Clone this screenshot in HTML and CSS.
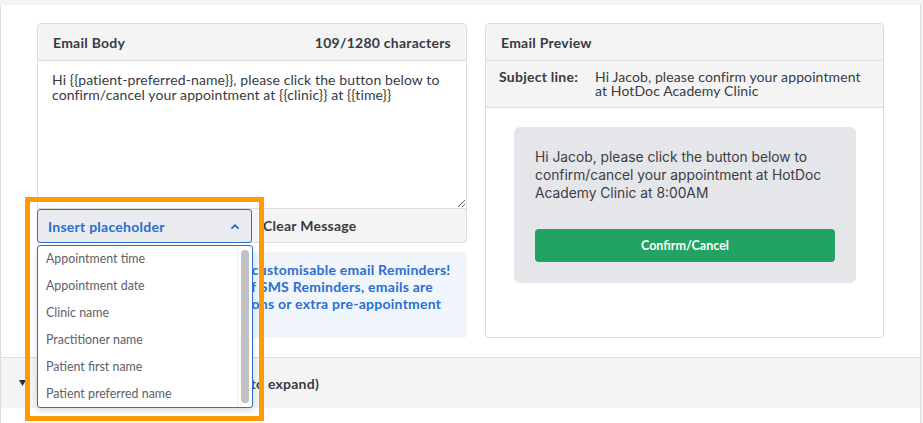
FILE: index.html
```
<!DOCTYPE html>
<html>
<head>
<meta charset="utf-8">
<link rel="stylesheet" href="styles.css">
</head>
<body>
<div class="page">
  <div class="editor">
    <div class="compose">
      <div class="card-head"><span>Email Body</span><span>109/1280 characters</span></div>
      <textarea class="body-input">Hi {{patient-preferred-name}}, please click the button below to confirm/cancel your appointment at {{clinic}} at {{time}}</textarea>
      <div class="tools">
        <div class="ph-wrap">
          <button class="ph-btn"><span>Insert placeholder</span><svg class="chev" width="8" height="5" viewBox="0 0 8 5"><polyline points="1,4.2 4,1.2 7,4.2" fill="none" stroke="#2a6fcf" stroke-width="1.8" stroke-linecap="round" stroke-linejoin="round"/></svg></button>
          <div class="ph-list">
            <ul class="ph-items">
              <li>Appointment time</li>
              <li>Appointment date</li>
              <li>Clinic name</li>
              <li>Practitioner name</li>
              <li>Patient first name</li>
              <li>Patient preferred name</li>
            </ul>
            <div class="ph-track"><div class="ph-thumb"></div></div>
          </div>
          <div class="highlight"></div>
        </div>
        <button class="clear-btn">Clear Message</button>
      </div>
      <div class="notice">Great news! You can now send customisable email Reminders!<br>Unlike the standard template of SMS Reminders, emails are<br>perfect for adding any instructions or extra pre-appointment<br>information.</div>
    </div>
    <div class="preview-card">
      <div class="card-head preview-head"><span>Email Preview</span></div>
      <div class="subject">
        <span class="subject-label">Subject line:</span>
        <span class="subject-text">Hi Jacob, please confirm your appointment<br>at HotDoc Academy Clinic</span>
      </div>
      <div class="preview-body">
        <div class="mail">
          <p class="mail-text">Hi Jacob, please click the button below to confirm/cancel your appointment at HotDoc Academy Clinic at 8:00AM</p>
          <div class="confirm">Confirm/Cancel</div>
        </div>
      </div>
    </div>
  </div>
  <div class="expand">
    <svg class="tri" width="7" height="6" viewBox="0 0 7 6"><polygon points="0,0 7,0 3.5,6" fill="#2b2f36"/></svg>
    <span>Email Reminder Scheduling (click to expand)</span>
  </div>
</div>
</body>
</html>
```
FILE: styles.css
```
* { box-sizing: border-box; }
html, body { margin: 0; padding: 0; }
body {
  background: #f4f4f4;
  font-family: Lato, "Liberation Sans", sans-serif;
  color: #333;
  font-size: 14px;
}
.page {
  margin-top: 5px;
  width: 921px;
  height: 418px;
  background: #fff;
  border-left: 1px solid #dcdcdc;
  border-right: 1px solid #dcdcdc;
}
.editor {
  display: grid;
  grid-template-columns: 430px 399px;
  column-gap: 18px;
  padding: 18px 36px 19px 36px;
  align-items: stretch;
}
.compose { display: flex; flex-direction: column; }
.card-head {
  height: 38px;
  display: flex;
  align-items: center;
  justify-content: space-between;
  padding: 0 15px;
  background: #f4f4f4;
  border: 1px solid #dcdcdc;
  border-radius: 4px 4px 0 0;
  font-weight: 700;
  letter-spacing: 0.25px;
  color: #363b44;
}
.body-input {
  display: block;
  width: 100%;
  height: 148px;
  margin: 0;
  border: 1px solid #dcdcdc;
  border-top: 0;
  padding: 11px 14px;
  font-family: Lato, sans-serif;
  font-size: 14px;
  line-height: 15px;
  letter-spacing: 0.11px;
  color: #363b44;
  outline: none;
}
.tools {
  display: flex;
  align-items: stretch;
  height: 34px;
  background: #f4f4f4;
  border-right: 1px solid #dcdcdc;
  border-bottom: 1px solid #dcdcdc;
  border-radius: 0 0 4px 4px;
}
.ph-wrap { position: relative; width: 215px; }
.ph-btn {
  width: 215px;
  height: 34px;
  margin: 0;
  display: flex;
  align-items: center;
  justify-content: space-between;
  padding: 0 12px 0 10px;
  background: #e9ebef;
  border: 1px solid #2a6fcf;
  border-radius: 3px;
  color: #2a6fcf;
  font-family: Lato, sans-serif;
  font-size: 14px;
  font-weight: 700;
  letter-spacing: 0.25px;
}
.chev { display: block; }
.ph-list {
  position: absolute;
  left: 0;
  top: 36px;
  width: 216px;
  height: 163px;
  display: flex;
  background: #fff;
  border: 1px solid #2a6fcf;
  border-radius: 3px;
  box-shadow: 0 3px 6px rgba(0, 0, 0, 0.14);
  z-index: 5;
}
.ph-items {
  list-style: none;
  margin: 0;
  padding: 0;
  flex: 1;
}
.ph-items li {
  height: 27px;
  line-height: 26px;
  padding-left: 8px;
  font-size: 12.4px;
  color: #5e6166;
}
.ph-track {
  width: 15px;
  border-left: 1px solid #ececec;
  padding: 4px 3px 4px 3px;
}
.ph-thumb {
  width: 8px;
  height: 153px;
  background: #c1c1c1;
  border-radius: 4px;
}
.highlight {
  position: absolute;
  left: -12px;
  top: -12px;
  width: 239px;
  height: 224px;
  border: 5px solid #ff9a00;
  z-index: 6;
  pointer-events: none;
}
.clear-btn {
  background: transparent;
  border: 0;
  padding: 0 0 0 11px;
  font-family: Lato, sans-serif;
  font-size: 14px;
  font-weight: 700;
  letter-spacing: 0.25px;
  color: #363b44;
}
.notice {
  margin-top: 9px;
  background: #f1f6fd;
  border-radius: 4px;
  padding: 9px 15px;
  line-height: 17px;
  font-weight: 700;
  letter-spacing: 0.25px;
  color: #2a6fcf;
  white-space: nowrap;
  overflow: hidden;
}
.preview-card {
  border: 1px solid #dcdcdc;
  border-radius: 4px;
  display: flex;
  flex-direction: column;
}
.preview-head {
  border: 0;
  border-bottom: 1px solid #dcdcdc;
  height: 37px;
}
.subject {
  display: flex;
  background: #f4f4f4;
  border-bottom: 1px solid #dcdcdc;
  padding: 9px 13px 9px 13px;
  line-height: 14px;
}
.subject-label {
  font-weight: 700;
  letter-spacing: 0.25px;
  color: #363b44;
  width: 96px;
  flex: none;
}
.subject-text { color: #363b44; letter-spacing: 0.11px; }
.preview-body { padding: 19px 28px 0 28px; }
.mail {
  width: 342px;
  background: #e5e6ea;
  border-radius: 6px;
  padding: 21px;
}
.mail-text {
  margin: 0 0 27px 0;
  font-family: Inter, "Liberation Sans", sans-serif;
  font-size: 13.8px;
  line-height: 18px;
  color: #3b3d42;
}
.confirm {
  height: 33px;
  line-height: 33px;
  background: #21a363;
  border-radius: 4px;
  color: #fff;
  text-align: center;
  font-size: 12.5px;
  font-weight: 700;
}
.expand {
  height: 51px;
  border-top: 1px solid #dcdcdc;
  background: #f4f4f4;
  display: flex;
  align-items: center;
  padding-left: 18px;
  font-weight: 700;
  letter-spacing: 0.25px;
  color: #363b44;
}
.tri { display: block; margin-right: 10px; }
```
